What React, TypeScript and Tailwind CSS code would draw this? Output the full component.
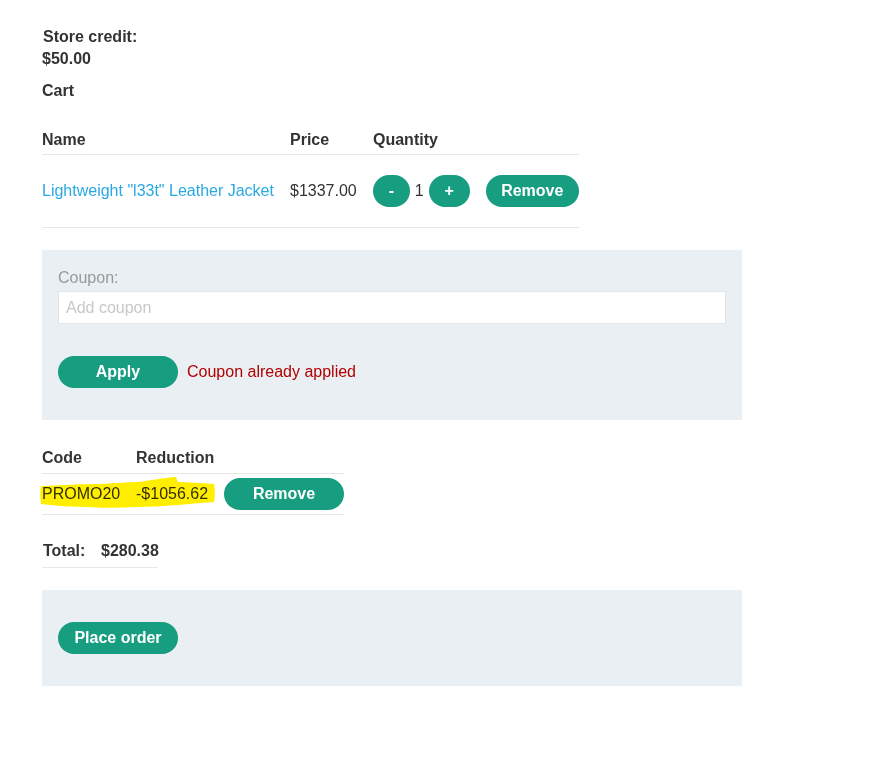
import React from "react";

const green = "bg-[#179d80]";

export default function App() {
  return (
    <div className="min-h-[766px] w-[896px] bg-white text-[#333332] text-[16px]" style={{ fontFamily: '"Liberation Sans", Arial, sans-serif' }}>
      <div className="pl-[42px] pt-[26px]">
        <p className="font-bold leading-[22px] pl-[1px]">Store credit:</p>
        <p className="font-bold leading-[22px]">$50.00</p>
        <p className="font-bold leading-[20px] mt-[11px]">Cart</p>

        <table className="mt-[29px] w-[537px] border-collapse table-fixed">
          <thead>
            <tr className="border-b border-[#e6e6e6]">
              <th className="w-[248px] text-left font-bold leading-[20px] pb-[4px] p-0">Name</th>
              <th className="w-[83px] text-left font-bold leading-[20px] pb-[4px] p-0">Price</th>
              <th className="text-left font-bold leading-[20px] pb-[4px] p-0">Quantity</th>
            </tr>
          </thead>
          <tbody>
            <tr className="border-b border-[#e6e6e6] h-[73px]">
              <td className="p-0 text-[#29a9e3] whitespace-nowrap">Lightweight "l33t" Leather Jacket</td>
              <td className="p-0">$1337.00</td>
              <td className="p-0">
                <div className="flex items-center">
                  <button className={`${green} text-white font-bold rounded-full h-[32px] w-[37px]`}>-</button>
                  <span className="px-[5px]">1</span>
                  <button className={`${green} text-white font-bold rounded-full h-[32px] w-[41px]`}>+</button>
                  <button className={`${green} text-white font-bold rounded-full h-[32px] w-[94px] ml-[16px]`}>Remove</button>
                </div>
              </td>
            </tr>
          </tbody>
        </table>

        <div className="mt-[22px] w-[700px] bg-[#e9eff2] px-[16px] pt-[18px] pb-[32px]">
          <p className="text-[#999999] leading-[20px]">Coupon:</p>
          <input
            className="mt-[3px] block w-full h-[33px] bg-white border border-[#e2e6e8] px-[7px] outline-none placeholder:text-[#c8c8c8]"
            placeholder="Add coupon"
          />
          <div className="mt-[32px] flex items-center">
            <button className={`${green} text-white font-bold rounded-full h-[32px] w-[120px]`}>Apply</button>
            <span className="ml-[9px] text-[#b30000]">Coupon already applied</span>
          </div>
        </div>

        <div className="relative mt-[28px] w-[302px]">
          <table className="w-[302px] border-collapse table-fixed">
            <thead>
              <tr className="border-b border-[#e6e6e6]">
                <th className="w-[94px] text-left font-bold leading-[20px] pb-[5px] p-0">Code</th>
                <th className="w-[88px] text-left font-bold leading-[20px] pb-[5px] p-0">Reduction</th>
                <th className="p-0"></th>
              </tr>
            </thead>
            <tbody>
              <tr className="border-b border-[#e6e6e6] h-[41px]">
                <td className="p-0">PROMO20</td>
                <td className="p-0">-$1056.62</td>
                <td className="p-0">
                  <button className={`${green} text-white font-bold rounded-full h-[32px] w-[120px]`}>Remove</button>
                </td>
              </tr>
            </tbody>
          </table>
          <svg
            className="absolute left-[-4px] top-[28px] mix-blend-multiply pointer-events-none"
            width="180"
            height="36"
            viewBox="0 0 180 36"
          >
            <path
              d="M3 10 C25 9 45 8 60 8 C80 7 92 6 100 6 C115 4 125 2 136 1 L138 1 C139 3 139 5 140 6 C150 6 162 7 176 8 C177 12 177 22 176 26 C160 27 150 28 140 29 C125 30 112 31 100 31 C80 32 60 32 50 31 C35 31 18 30 3 28 C2 22 2 15 3 10 Z"
              fill="#ffee00"
            />
          </svg>
        </div>

        <table className="mt-[26px] w-[116px] border-collapse table-fixed">
          <tbody>
            <tr className="border-b border-[#e6e6e6]">
              <th className="p-0 pb-[6px] pl-[1px] text-left font-bold leading-[20px] w-[59px]">Total:</th>
              <th className="p-0 pb-[6px] text-left font-bold leading-[20px]">$280.38</th>
            </tr>
          </tbody>
        </table>

        <div className="mt-[22px] w-[700px] h-[96px] bg-[#e9eff2] px-[16px] pt-[32px]">
          <button className={`${green} text-white font-bold rounded-full h-[32px] w-[120px]`}>Place order</button>
        </div>
      </div>
    </div>
  );
}
